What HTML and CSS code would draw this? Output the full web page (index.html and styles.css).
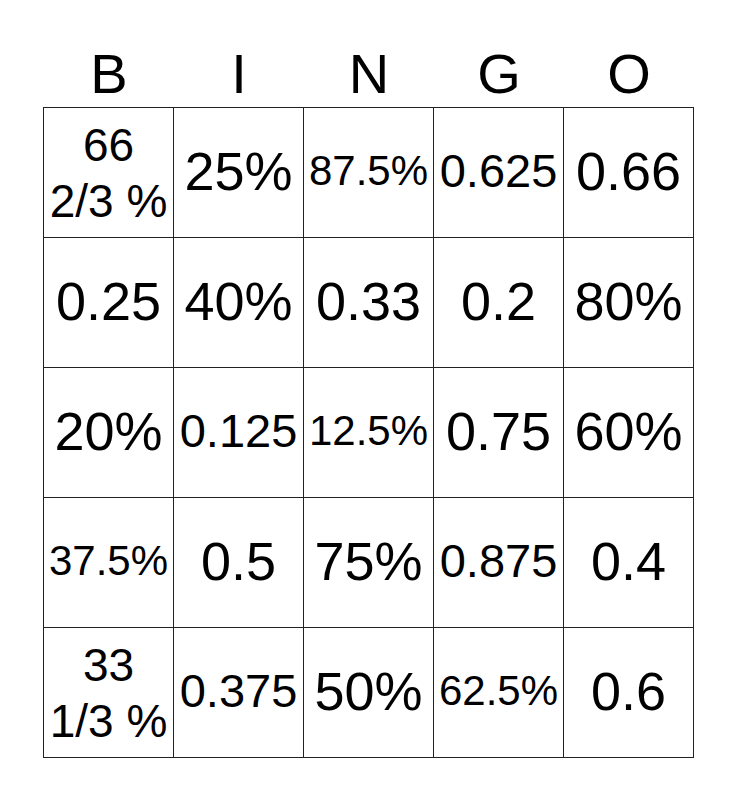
FILE: index.html
```html
<!DOCTYPE html>
<html>
<head>
<meta charset="utf-8">
<link rel="stylesheet" href="styles.css">
</head>
<body>
<div class="card">
  <div class="head">
    <span>B</span><span>I</span><span>N</span><span>G</span><span>O</span>
  </div>
  <div class="board">
    <div class="cell two">66<br>2/3 %</div>
    <div class="cell big">25%</div>
    <div class="cell small">87.5%</div>
    <div class="cell mid">0.625</div>
    <div class="cell big">0.66</div>

    <div class="cell big">0.25</div>
    <div class="cell big">40%</div>
    <div class="cell big">0.33</div>
    <div class="cell big">0.2</div>
    <div class="cell big">80%</div>

    <div class="cell big">20%</div>
    <div class="cell mid">0.125</div>
    <div class="cell small">12.5%</div>
    <div class="cell big">0.75</div>
    <div class="cell big">60%</div>

    <div class="cell small">37.5%</div>
    <div class="cell big">0.5</div>
    <div class="cell big">75%</div>
    <div class="cell mid">0.875</div>
    <div class="cell big">0.4</div>

    <div class="cell two">33<br>1/3 %</div>
    <div class="cell mid">0.375</div>
    <div class="cell big">50%</div>
    <div class="cell small">62.5%</div>
    <div class="cell big">0.6</div>
  </div>
</div>
</body>
</html>
```

FILE: styles.css
```css
html, body {
  margin: 0;
  padding: 0;
  background: #fff;
}
body {
  font-family: "Liberation Sans", Arial, sans-serif;
  color: #000;
}
.card {
  margin-left: 43px;
  width: 651px;
}
.head {
  display: grid;
  grid-template-columns: repeat(5, 130px);
  padding-left: 1px;
  height: 107px;
  align-items: end;
  box-sizing: border-box;
  padding-bottom: 5px;
}
.head span {
  text-align: center;
  font-size: 56px;
  line-height: 56px;
}
.board {
  display: grid;
  grid-template-columns: repeat(5, 130px);
  grid-auto-rows: 130px;
  border-left: 1px solid #222;
  border-top: 1px solid #222;
}
.cell {
  box-sizing: border-box;
  border-right: 1px solid #222;
  border-bottom: 1px solid #222;
  display: flex;
  align-items: center;
  justify-content: center;
  text-align: center;
  white-space: nowrap;
}
.big { font-size: 54px; padding-bottom: 4px; }
.mid { font-size: 47px; padding-bottom: 4px; }
.small { font-size: 42px; padding-bottom: 4px; }
.two { font-size: 46px; line-height: 56px; }
```
